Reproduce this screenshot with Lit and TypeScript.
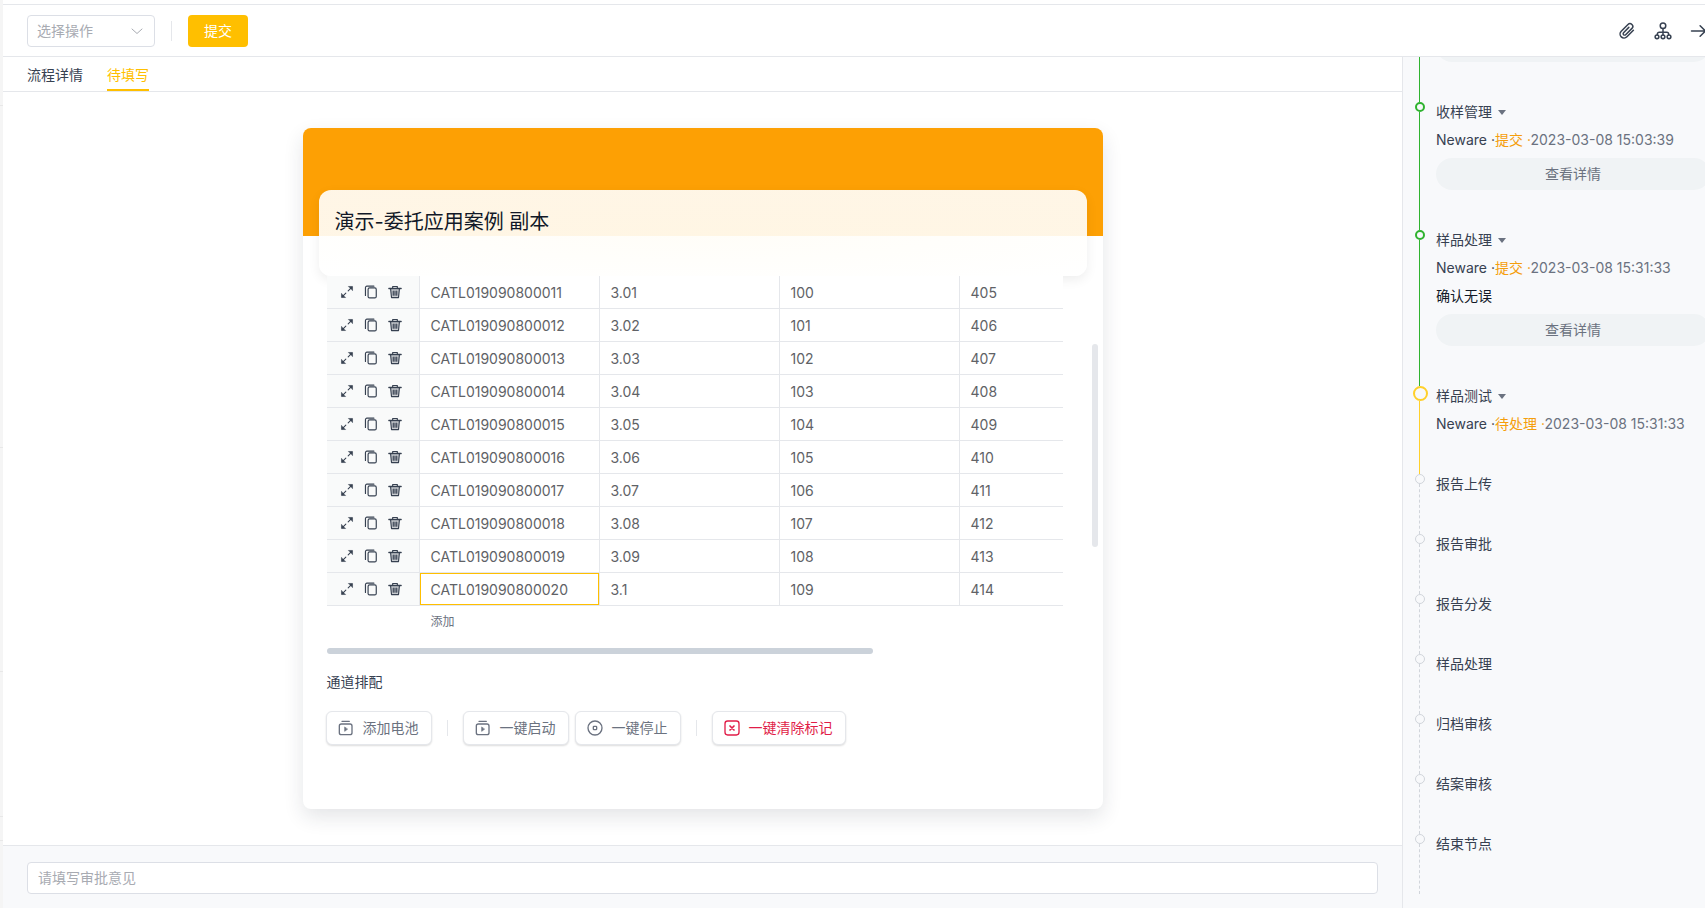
import { LitElement, html, css, svg } from "lit";
import { customElement, state } from "lit/decorators.js";
import { classMap } from "lit/directives/class-map.js";
import { styleMap } from "lit/directives/style-map.js";

type StepState = "done" | "current" | "todo";

interface Step {
  name: string;
  state: StepState;
  user?: string;
  action?: string;
  time?: string;
  note?: string;
  detail?: boolean;
}

const STEPS: Step[] = [
  { name: "收样管理", state: "done", user: "Neware", action: "提交", time: "2023-03-08 15:03:39", detail: true },
  { name: "样品处理", state: "done", user: "Neware", action: "提交", time: "2023-03-08 15:31:33", note: "确认无误", detail: true },
  { name: "样品测试", state: "current", user: "Neware", action: "待处理", time: "2023-03-08 15:31:33" },
  { name: "报告上传", state: "todo" },
  { name: "报告审批", state: "todo" },
  { name: "报告分发", state: "todo" },
  { name: "样品处理", state: "todo" },
  { name: "归档审核", state: "todo" },
  { name: "结案审核", state: "todo" },
  { name: "结束节点", state: "todo" },
];

const ROWS = Array.from({ length: 10 }, (_, i) => [
  `CATL0190908000${11 + i}`,
  String((301 + i) / 100),
  String(100 + i),
  String(405 + i),
]);

// Heights of the sections in the collapsed strip on the left.
const STRIP = [106, 342, 224, 145, 24];

const icon = (size: number, body: unknown) => html`<svg
  width=${size} height=${size} viewBox="0 0 24 24" fill="none" stroke="currentColor"
  stroke-width="2" stroke-linecap="round" stroke-linejoin="round" aria-hidden="true">${body}</svg>`;

const expandIcon = icon(14, svg`<path stroke-width="1.800" d="M14 10l6-6M10 14l-6 6"/><path fill="currentColor" stroke-width="1" d="M15 2.500h6.500V9ZM2.500 15v6.500H9Z"/>`);
const copyIcon = icon(14, svg`<rect x="7" y="5" width="14" height="17" rx="2.500"/><path d="M2.500 18V4.500A2.500 2.500 0 0 1 5 2h12"/>`);
const trashIcon = icon(14, svg`<path stroke-width="2.400" d="M1.500 6h21"/><path d="M8 5.500V2.500h8v3"/><path fill="currentColor" fill-opacity="0.25" d="M4.500 7 6 21.500h12L19.500 7"/><path stroke-width="2" d="M9 10.500v7M12 10.500v7M15 10.500v7"/>`);
const clipIcon = icon(18, svg`<path d="m20.500 11-8.600 8.800a5.300 5.300 0 0 1-7.600-7.500l9-9a3.700 3.700 0 0 1 5.300 5.200l-8.400 8.400a1.900 1.900 0 0 1-2.800-2.700l7-7"/>`);
const orgIcon = icon(18, svg`<circle cx="12" cy="5" r="3.700"/><path d="M12 8.700v8.500M4.500 17v-1a2.500 2.500 0 0 1 2.500-2.500h10a2.500 2.500 0 0 1 2.500 2.500v1"/><circle cx="4" cy="19.800" r="2.500"/><circle cx="12" cy="19.800" r="2.500"/><circle cx="20" cy="19.800" r="2.500"/>`);
const arrowIcon = icon(18, svg`<path d="M2 12h18M13.500 5l7 7-7 7"/>`);
const playIcon = icon(16, svg`<rect x="2" y="6" width="19" height="16" rx="3"/><path d="M6 2h11"/><path fill="currentColor" stroke-width="1" d="M10 11v6l4-3z"/>`);
const stopIcon = icon(16, svg`<circle cx="12" cy="12" r="10.500"/><rect x="9.500" y="9.500" width="5" height="5" rx="1"/>`);
const clearIcon = icon(16, svg`<rect x="1.500" y="1.500" width="21" height="21" rx="4"/><path stroke-width="2.500" d="m9 9 6 6M15 9l-6 6"/>`);

@customElement("app-root")
export class AppRoot extends LitElement {
  static styles = css`
    :host {
      --line: #e5e7eb;
      --ink: #374151;
      --muted: #6b7280;
      --brand: #ffbf00;
      --panel: #f8f9fb;
      display: flex;
      height: 100vh;
      overflow: hidden;
      background: #fff;
      color: var(--ink);
      font: 14px/20px Inter, "Noto Sans CJK SC", sans-serif;
    }
    * { box-sizing: border-box; }
    button, input, select { font: inherit; color: inherit; }
    button { background: none; border: 0; padding: 0; cursor: pointer; }
    svg { display: block; flex: none; }

    .edge { flex: none; width: 3px; background: #f5f5f5; }
    .part { border-bottom: 1px solid #e8e8e8; }
    .page { flex: 1; min-width: 0; display: flex; flex-direction: column; margin-top: 4px; border-top: 1px solid var(--line); }

    .topbar { flex: none; display: flex; align-items: center; height: 52px; padding-left: 24px; border-bottom: 1px solid var(--line); }
    .picker { display: grid; align-items: center; width: 128px; height: 32px; }
    .picker > * { grid-area: 1 / 1; }
    .picker select { appearance: none; width: 100%; height: 100%; padding: 0 9px; border: 1px solid #dcdfe6; border-radius: 4px; background: #fff; color: #a8abb2; }
    .picker svg { justify-self: end; margin-right: 12px; color: #a8abb2; pointer-events: none; }
    .rule { flex: none; width: 1px; height: 20px; margin: 0 16px; background: var(--line); }
    .submit { width: 60px; height: 32px; border-radius: 4px; background: var(--brand); color: #fff; }
    .tools { flex: 1; display: flex; justify-content: flex-end; gap: 18px; margin-right: -3px; }

    .below { flex: 1; min-height: 0; display: flex; }
    .main { flex: 1; min-width: 0; display: flex; flex-direction: column; }
    .tabs { flex: none; display: flex; gap: 24px; height: 35px; padding-left: 24px; border-bottom: 1px solid var(--line); }
    .tab { padding-top: 4px; border-bottom: 2px solid transparent; }
    .tab.on { color: var(--brand); border-color: var(--brand); }

    .canvas { flex: 1; min-height: 0; padding: 36px 24px; display: flex; justify-content: center; }
    .card { display: flex; flex-direction: column; width: 100%; max-width: 800px; border-radius: 8px; box-shadow: 0 8px 20px rgba(31, 41, 55, 0.12); }
    .banner { flex: none; height: 108px; padding: 62px 16px 0; border-radius: 8px 8px 0 0; background: #fda004; }
    .title { height: 86px; margin: 0; padding: 18px 16px; border-radius: 12px; background: radial-gradient(ellipse at center, rgba(255, 253, 247, 0.92), rgba(255, 255, 255, 0.9)); box-shadow: 0 4px 12px rgba(0, 0, 0, 0.07); color: #111827; font-size: 20px; line-height: 28px; font-weight: 400; }
    .form { flex: 1; min-height: 0; display: flex; gap: 29px; padding: 40px 5px 0 24px; }
    .fields { flex: 1; min-width: 0; position: relative; }
    .vbar { flex: none; width: 6px; height: 203px; margin-top: 68px; border-radius: 3px; background: #e5e7eb; }
    .hbar { width: 546px; height: 6px; margin-top: 16px; border-radius: 3px; background: #cbd2da; }

    .scroller { overflow: hidden; background: #fff; }
    .grid { width: 813px; border-collapse: separate; border-spacing: 0; table-layout: fixed; color: #606266; }
    .grid td { height: 33px; padding: 2px 11px 0; border-right: 1px solid var(--line); border-bottom: 1px solid var(--line); }
    .grid .ops { width: 93px; padding: 0 0 0 13px; background: #f9fafa; color: var(--ink); }
    .grid .picked { box-shadow: inset 0 0 0 1px var(--brand); }
    .ops-row { display: flex; gap: 10px; }
    .add { display: block; margin: 6px 0 0 104px; color: var(--muted); font-size: 12px; line-height: 20px; }

    .heading { margin: 18px 0 0; font-size: 14px; line-height: 20px; font-weight: 400; }
    .actions { display: flex; align-items: center; margin: 19px 0 0 -1px; color: var(--muted); }
    .act { display: flex; align-items: center; gap: 9px; height: 34px; padding: 0 12px 0 11px; border: 1px solid #e5e7eb; border-radius: 6px; background: #fff; box-shadow: 0 1px 2px rgba(0, 0, 0, 0.14); }
    .act + .act { margin-left: 6px; }
    .act.danger { color: #e11d48; }
    .actions .rule { height: 16px; margin: 0 15px; }

    .comment { flex: none; padding: 16px 24px 14px; border-top: 1px solid var(--line); background: var(--panel); }
    .comment input { display: block; width: 100%; height: 32px; padding: 0 10px 1px; border: 1px solid #dcdfe6; border-radius: 4px; background: #fff; outline: none; }
    .comment input::placeholder { color: #a8abb2; opacity: 1; }

    .side { flex: none; width: 303px; overflow: hidden; border-left: 1px solid var(--line); background: var(--panel); }
    .steps { margin: 0; padding: 0 0 0 9px; list-style: none; }
    .step { display: grid; grid-template-columns: 16px 274px; gap: 8px; line-height: 28px; }
    .rail { display: flex; flex-direction: column; align-items: flex-start; margin: 4px 0 -4px; }
    .dot { flex: none; width: 10px; height: 10px; margin-left: 3px; border: 1px solid #d1d5db; border-radius: 50%; }
    .line { flex: 1; margin-left: 7px; border-left: 1px dashed #d1d5db; }
    .done .dot { border: 2px solid #2fb32f; }
    .done .line { border-left: 1px solid #2fb32f; }
    .current .dot { width: 15px; height: 15px; margin-left: 1px; border: 2px solid #ffd02b; }
    .current .line { border-left: 1px solid #ffd02b; }
    .info { padding-bottom: 32px; }
    .name { display: flex; align-items: center; gap: 6px; }
    .caret { border: 4px solid transparent; border-top: 5px solid var(--muted); border-bottom: 0; }
    .log { white-space: pre; }
    .verb { color: #f59e0b; }
    .time { color: #6b7280; }
    .note { color: #111827; }
    .detail { display: block; width: 100%; height: 32px; margin: 4px 0; border-radius: 16px; background: #f0f3f5; color: var(--muted); }
    .previous .rail { margin-top: 0; }
    .previous .info { height: 41px; padding: 0; overflow: hidden; }
    .previous .detail { margin-top: -27px; }
  `;

  @state() private tab = "待填写";

  private renderStep(s: Step) {
    return html`<li class="step ${s.state}">
      <div class="rail"><span class="dot"></span><span class="line"></span></div>
      <div class="info">
        <div class="name">${s.name}${s.user ? html`<span class="caret"></span>` : ""}</div>
        ${s.user
          ? html`<div class="log">${s.user} ·<span class="verb">${s.action} ·</span><span class="time">${s.time}</span></div>`
          : ""}
        ${s.note ? html`<div class="note">${s.note}</div>` : ""}
        ${s.detail ? html`<button class="detail">查看详情</button>` : ""}
      </div>
    </li>`;
  }

  render() {
    return html`
      <div class="edge">${STRIP.map((h) => html`<div class="part" style=${styleMap({ height: `${h}px` })}></div>`)}</div>
      <div class="page">
        <header class="topbar">
          <div class="picker">
            <select aria-label="选择操作"><option>选择操作</option></select>
            ${icon(12, svg`<path d="m2 8 10 9 10-9"/>`)}
          </div>
          <span class="rule"></span>
          <button class="submit">提交</button>
          <div class="tools">
            <button aria-label="附件">${clipIcon}</button>
            <button aria-label="流程图">${orgIcon}</button>
            <button aria-label="收起">${arrowIcon}</button>
          </div>
        </header>
        <div class="below">
          <main class="main">
            <nav class="tabs">
              ${["流程详情", "待填写"].map(
                (t) => html`<button class=${classMap({ tab: true, on: this.tab === t })} @click=${() => (this.tab = t)}>${t}</button>`
              )}
            </nav>
            <div class="canvas">
              <section class="card">
                <div class="banner"><h1 class="title">演示-委托应用案例 副本</h1></div>
                <div class="form">
                  <div class="fields">
                    <div class="scroller">
                      <table class="grid">
                        <tbody>
                          ${ROWS.map(
                            (r, y) => html`<tr>
                              <td class="ops"><div class="ops-row">
                                <button aria-label="展开">${expandIcon}</button>
                                <button aria-label="复制">${copyIcon}</button>
                                <button aria-label="删除">${trashIcon}</button>
                              </div></td>
                              ${r.map((c, x) => html`<td class=${classMap({ picked: y === ROWS.length - 1 && x === 0 })}>${c}</td>`)}
                            </tr>`
                          )}
                        </tbody>
                      </table>
                    </div>
                    <button class="add">添加</button>
                    <div class="hbar"></div>
                    <h2 class="heading">通道排配</h2>
                    <div class="actions">
                      <button class="act">${playIcon}添加电池</button>
                      <span class="rule"></span>
                      <button class="act">${playIcon}一键启动</button>
                      <button class="act">${stopIcon}一键停止</button>
                      <span class="rule"></span>
                      <button class="act danger">${clearIcon}一键清除标记</button>
                    </div>
                  </div>
                  <div class="vbar"></div>
                </div>
              </section>
            </div>
            <footer class="comment"><input aria-label="审批意见" placeholder="请填写审批意见" /></footer>
          </main>
          <aside class="side">
            <ol class="steps">
              <li class="step done previous">
                <div class="rail"><span class="line"></span></div>
                <div class="info"><button class="detail" aria-label="上一步详情"></button></div>
              </li>
              ${STEPS.map((s) => this.renderStep(s))}
            </ol>
          </aside>
        </div>
      </div>
    `;
  }
}
